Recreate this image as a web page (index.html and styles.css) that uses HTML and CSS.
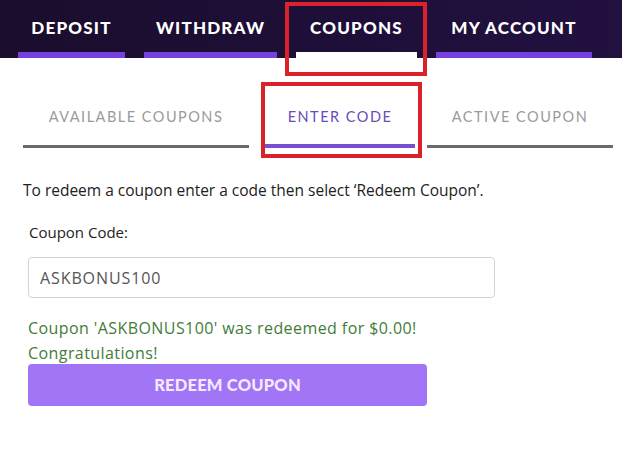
FILE: index.html
```html
<!DOCTYPE html>
<html>
<head>
<meta charset="utf-8">
<link rel="stylesheet" href="styles.css">
</head>
<body>
<nav class="nav">
  <a class="nav-tab w1">DEPOSIT</a>
  <a class="nav-tab w2">WITHDRAW</a>
  <a class="nav-tab w3 active">COUPONS</a>
  <a class="nav-tab w4">MY ACCOUNT</a>
</nav>
<div class="subtabs">
  <a class="subtab s1">AVAILABLE COUPONS</a>
  <a class="subtab s2 active">ENTER CODE</a>
  <a class="subtab s3">ACTIVE COUPON</a>
</div>
<main class="content">
  <p class="intro">To redeem a coupon enter a code then select ‘Redeem Coupon’.</p>
  <label class="label">Coupon Code:</label>
  <div class="input">ASKBONUS100</div>
  <p class="success">Coupon 'ASKBONUS100' was redeemed for $0.00!<br>Congratulations!</p>
  <button class="btn">REDEEM COUPON</button>
</main>
<div class="mark mark1"></div>
<div class="mark mark2"></div>
</body>
</html>
```
FILE: styles.css
```css
* { box-sizing: border-box; }
body {
  margin: 0;
  background: #fff;
  font-family: "Open Sans", "Liberation Sans", sans-serif;
  position: relative;
  width: 622px;
  height: 460px;
  overflow: hidden;
}
.nav {
  height: 58px;
  background: linear-gradient(90deg, #1b0d2c 0%, #1e0f3a 60%, #22113f 100%);
  display: flex;
  gap: 19px;
  padding-left: 18px;
}
.nav-tab {
  display: flex;
  align-items: flex-start;
  justify-content: center;
  padding-top: 17px;
  color: #fff;
  font-family: "Lato", sans-serif;
  font-weight: 900;
  font-size: 17px;
  letter-spacing: 1.2px;
  border-bottom: 6px solid #7540e0;
}
.nav-tab.active { border-bottom-color: #fff; }
.w1 { width: 107px; }
.w2 { width: 133px; }
.w3 { width: 121px; }
.w4 { width: 156px; }

.subtabs {
  display: flex;
  padding-left: 23px;
  margin-top: 41px;
}
.subtab {
  display: flex;
  justify-content: center;
  font-family: "Lato", sans-serif;
  font-size: 14.5px;
  letter-spacing: 1.5px;
  color: #9a9a9a;
  height: 49px;
  padding-top: 9px;
  border-bottom: 3px solid #6a6a6a;
}
.subtab.active { color: #6a4bb8; border-bottom: 4px solid #7a4ed0; }
.s1 { width: 226px; }
.s2 { width: 150px; margin-left: 16px; margin-top: -1px; height: 50px; padding-top: 10px; }
.s3 { width: 186px; margin-left: 12px; }

.content { padding: 32px 0 0 23px; }
.intro {
  margin: 0;
  font-size: 15.5px;
  color: #222;
  line-height: 20px;
}
.label {
  display: block;
  margin: 22px 0 0 6px;
  font-size: 15px;
  color: #222;
  line-height: 20px;
}
.input {
  margin: 15px 0 0 5px;
  width: 467px;
  height: 41px;
  border: 1px solid #d4d4d4;
  border-radius: 4px;
  padding: 10px 0 0 11px;
  font-size: 16px;
  letter-spacing: 0.9px;
  color: #555;
  line-height: 20px;
}
.success {
  margin: 18px 0 0 5px;
  color: #3f7d38;
  font-size: 16px;
  letter-spacing: 0.42px;
  line-height: 25px;
}
.btn {
  display: block;
  margin: -2px 0 0 5px;
  width: 399px;
  height: 42px;
  border: 0;
  border-radius: 4px;
  background: #a274f6;
  color: #f3eaff;
  font-family: "Lato", sans-serif;
  font-weight: 900;
  font-size: 16.5px;
  letter-spacing: 0.2px;
}
.mark {
  position: absolute;
  border: 4px solid #d9222a;
}
.mark1 { left: 285px; top: 2px; width: 142px; height: 74px; }
.mark2 { left: 261px; top: 82px; width: 161px; height: 76px; }
```
